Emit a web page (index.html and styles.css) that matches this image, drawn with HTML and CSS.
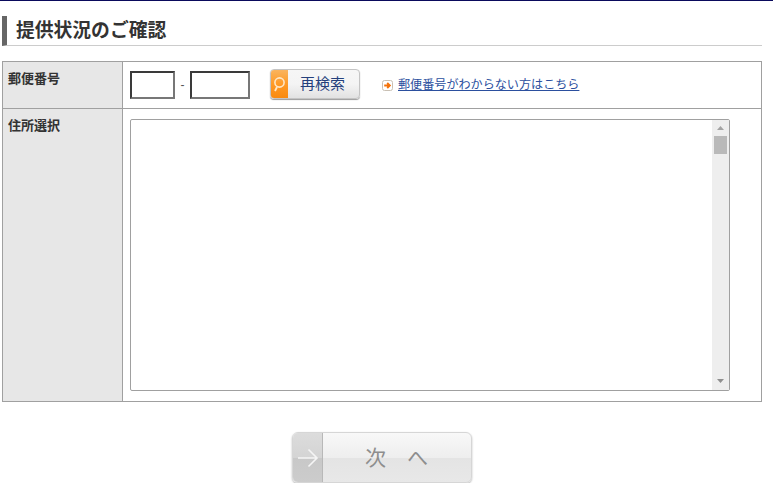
FILE: index.html
```html
<!DOCTYPE html>
<html lang="ja">
<head>
<meta charset="utf-8">
<title>提供状況のご確認</title>
<link rel="stylesheet" href="styles.css">
</head>
<body>
<div class="topline"></div>
<main class="page">
  <h1 class="title">提供状況のご確認</h1>
  <div class="form">
    <div class="row row-zip">
      <div class="label">郵便番号</div>
      <div class="cell zip-cell">
        <span class="input input-a"></span>
        <span class="dash">-</span>
        <span class="input input-b"></span>
        <button class="search" type="button">
          <span class="search-icon">
            <svg width="17" height="28" viewBox="0 0 17 28"><circle cx="8.500" cy="12.500" r="4.600" fill="none" stroke="#ffe6c4" stroke-width="1.600"/><path d="M6 17l-2 4" stroke="#ffe6c4" stroke-width="1.800" fill="none"/></svg>
          </span>
          <span class="search-text">再検索</span>
        </button>
        <span class="help">
          <svg class="help-icon" width="11" height="11" viewBox="0 0 11 11"><rect x=".5" y=".5" width="10" height="10" rx="2" fill="#fff" stroke="#c9c0b4"/><path d="M2.200 5.500h5M5.200 3l2.600 2.500L5.200 8" fill="none" stroke="#f4720a" stroke-width="1.900"/></svg>
          <a class="help-link" href="#">郵便番号がわからない方はこちら</a>
        </span>
      </div>
    </div>
    <div class="row row-addr">
      <div class="label">住所選択</div>
      <div class="cell addr-cell">
        <div class="listbox">
          <div class="scrollbar">
            <svg class="arrow" width="7" height="4" viewBox="0 0 7 4"><path d="M3.500 0L7 4H0z" fill="#a3a3a3"/></svg>
            <div class="thumb"></div>
            <div class="track"></div>
            <svg class="arrow" width="7" height="4" viewBox="0 0 7 4"><path d="M0 0h7L3.500 4z" fill="#8f8f8f"/></svg>
          </div>
        </div>
      </div>
    </div>
  </div>
  <div class="actions">
    <button class="next" type="button">
      <span class="next-icon">
        <svg width="22" height="22" viewBox="0 0 22 22"><path d="M1 11h19M11.500 2.500L20 11l-8.500 8.500" fill="none" stroke="#f5f5f5" stroke-width="1.600"/></svg>
      </span>
      <span class="next-text">次　へ</span>
    </button>
  </div>
</main>
</body>
</html>
```
FILE: styles.css
```css
* { box-sizing: border-box; }
html, body { margin: 0; padding: 0; background: #fff; }
body {
  font-family: "Liberation Sans", "Noto Sans CJK JP", sans-serif;
  color: #333;
  overflow: hidden;
}
.topline { height: 1px; background: #0a0a5c; }
.page { width: 762px; padding: 15px 0 0 2px; }
.title {
  margin: 0;
  height: 30px;
  border-left: 5px solid #666;
  border-bottom: 1px solid #ccc;
  padding-left: 9px;
  font-size: 18.800px;
  line-height: 29px;
  font-weight: 700;
  color: #333;
}
.form {
  margin-top: 15px;
  border: 1px solid #a0a0a0;
}
.row { display: flex; }
.row-zip { height: 47px; border-bottom: 1px solid #a0a0a0; }
.row-addr { height: 292px; }
.label {
  width: 120px;
  flex: none;
  background: #e7e7e7;
  border-right: 1px solid #a0a0a0;
  padding: 8px 0 0 5px;
  font-size: 13px;
  line-height: 17px;
  font-weight: 700;
  color: #333;
}
.cell { flex: 1; padding-left: 7px; }
.zip-cell { display: flex; align-items: center; padding-bottom: 3px; }
.input {
  display: block;
  height: 28px;
  margin-top: 2px;
  border: 2px solid;
  border-color: #3a3a3a #777 #777 #3a3a3a;
  background: #fff;
}
.input-a { width: 45px; }
.input-b { width: 60px; }
.dash { width: 15px; text-align: center; font-size: 12px; color: #555; margin-top: 2px; }
.search {
  display: flex;
  width: 90px;
  height: 30px;
  margin: 0 0 0 20px;
  padding: 0;
  border: 1px solid #c4c4c4;
  border-radius: 4px;
  background: linear-gradient(#f6f6f6, #f4f4f4 50%, #e2e2e2);
  box-shadow: 0 1px 1px #999;
  overflow: hidden;
  font-family: inherit;
}
.search-icon {
  width: 17px;
  height: 100%;
  flex: none;
  background: linear-gradient(#f9b45f, #ff9a26 50%, #f98a10);
}
.search-icon svg { display: block; }
.search-text {
  flex: 1;
  text-align: center;
  font-size: 15px;
  line-height: 27px;
  color: #24407c;
  padding-right: 2px;
  letter-spacing: 0;
}
.help { display: flex; align-items: center; margin-left: 22px; margin-top: 2px; }
.help-icon { flex: none; margin-top: 2px; margin-right: 5px; }
.help-link { font-size: 12.100px; line-height: 16px; color: #2b4f9e; text-decoration: underline; }
.addr-cell { padding-top: 10px; }
.listbox {
  display: flex;
  justify-content: flex-end;
  width: 600px;
  height: 272px;
  border: 1px solid #a0a0a0;
  border-radius: 2px;
  background: #fff;
}
.scrollbar {
  width: 17px;
  display: flex;
  flex-direction: column;
  align-items: center;
  background: #eeeeee;
  padding: 6px 0 7px;
}
.thumb { width: 13px; height: 18px; margin-top: 6px; background: #b9b9b9; }
.track { flex: 1; }
.actions { display: flex; justify-content: center; padding-top: 30px; }
.next {
  display: flex;
  width: 180px;
  height: 51px;
  padding: 0;
  border: 1px solid #d6d6d6;
  border-radius: 6px;
  background: linear-gradient(#f8f8f8, #eeeeee 50%, #e4e4e4 52%, #e8e8e8);
  box-shadow: 0 1px 2px #b5b5b5;
  overflow: hidden;
  font-family: inherit;
}
.next-icon {
  display: flex;
  align-items: center;
  justify-content: center;
  width: 30px;
  height: 100%;
  flex: none;
  background: linear-gradient(#dcdcdc, #d4d4d4 50%, #c8c8c8 52%, #cccccc);
  border-right: 1px solid #b8b8b8;
}
.next-text {
  flex: 1;
  text-align: center;
  font-size: 21px;
  line-height: 49px;
  color: #8e8e8e;
  padding-right: 1px;
}
```
